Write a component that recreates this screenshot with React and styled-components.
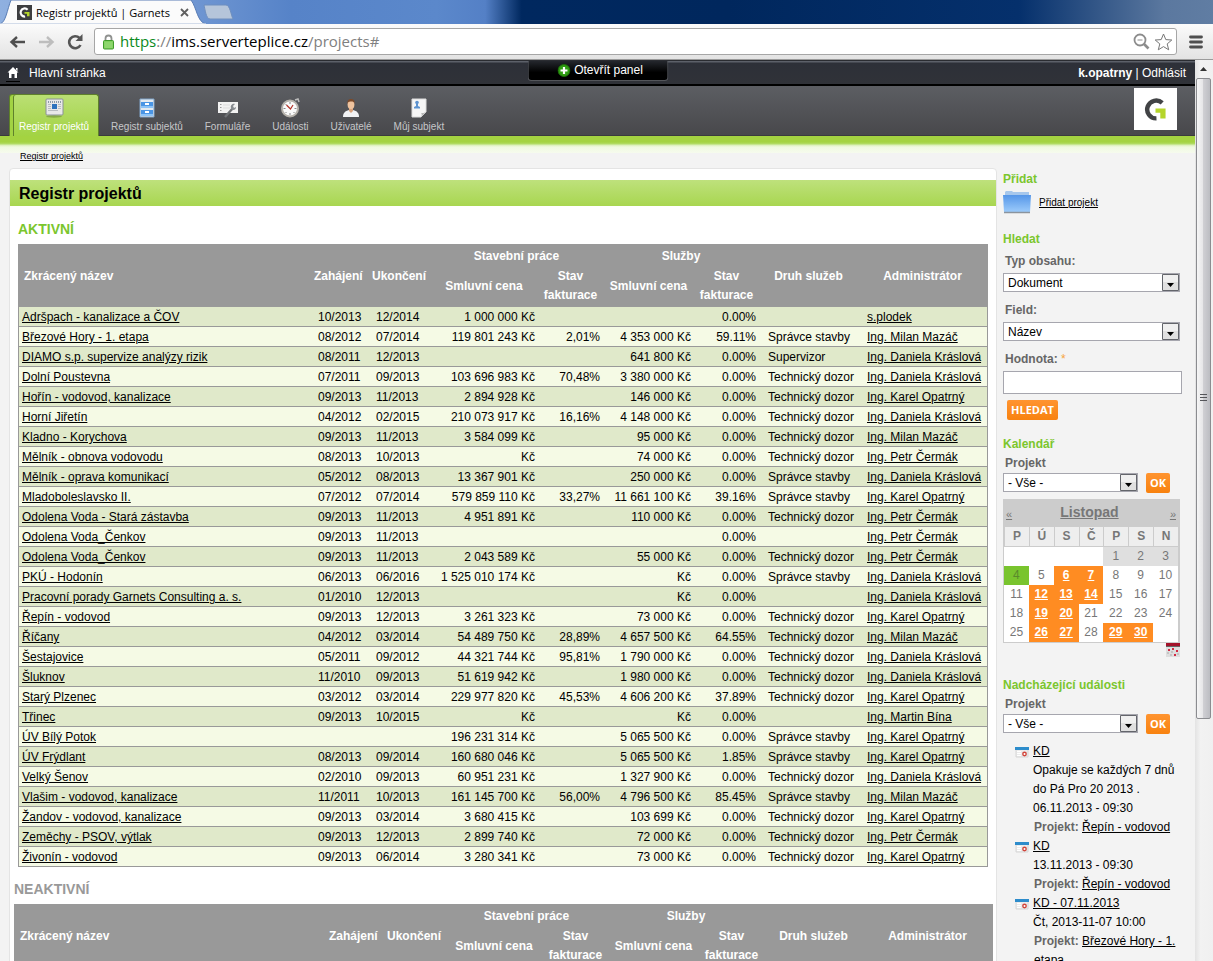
import React from 'react';
import styled, { createGlobalStyle, css } from 'styled-components';

const GlobalStyle = createGlobalStyle`
  * {
    box-sizing: border-box;
  }

  body {
    margin: 0;
    overflow: hidden;
    background: #f3f3f3;
    color: #000;
    font-family: 'Liberation Sans', Arial, sans-serif;
    font-size: 12px;
    line-height: 19px;
  }

  a {
    color: inherit;
  }

  svg {
    display: block;
    flex: none;
  }
`;

/* Browser window */

const Window = styled.div`
  display: flex;
  flex-direction: column;
  height: 100vh;
  overflow: hidden;
`;

const TabStrip = styled.div`
  display: flex;
  flex: none;
  height: 24px;
  background: linear-gradient(
    90deg,
    #8fb0e0 0,
    #6f96d2 16%,
    #5683c8 24%,
    #5b88cb 36%,
    #5480c6 40%,
    #00285f 43%,
    #00275d 60%,
    #05306c 84%,
    #5b789f 96%,
    #607da3 100%
  );
`;

const Tab = styled.div`
  position: relative;
  display: flex;
  align-items: center;
  width: 206px;
  height: 24px;
  padding-left: 17px;
`;

const TabShape = styled.svg`
  position: absolute;
  top: 0;
  left: 0;
`;

const TabTitle = styled.span`
  position: relative;
  width: 138px;
  margin-left: 4px;
  overflow: hidden;
  white-space: nowrap;
  font-family: 'Open Sans', sans-serif;
  font-size: 11px;
`;

const TabIcon = styled.span`
  position: relative;
`;

const TabClose = styled.button`
  position: relative;
  margin-left: 6px;
  padding: 0;
  border: 0;
  background: none;
`;

const Toolbar = styled.div`
  display: flex;
  flex: none;
  align-items: center;
  height: 36px;
  padding: 0 10px 0 9px;
  border-bottom: 1px solid #9b9b9b;
  background: linear-gradient(#fbfbfb, #e3e3e3);
`;

const ToolButton = styled.button`
  margin-right: 12px;
  padding: 0;
  border: 0;
  background: none;

  &:last-child {
    margin: 0 0 0 12px;
  }
`;

const AddressBar = styled.div`
  display: flex;
  flex: 1;
  align-items: center;
  height: 27px;
  margin-left: -2px;
  padding: 0 3px 0 7px;
  border: 1px solid #a6a6a6;
  border-radius: 3px;
  background: #fff;
`;

const Address = styled.div`
  flex: 1;
  margin-left: 5px;
  color: #808080;
  font-family: 'Open Sans', sans-serif;
  font-size: 15px;

  span {
    color: #0b8a1c;
  }

  b {
    color: #000;
    font-weight: 400;
  }
`;

const AddressActions = styled.div`
  display: flex;
  gap: 4px;
`;

const Viewport = styled.div`
  display: flex;
  flex: 1;
  min-height: 0;
`;

const Page = styled.div`
  flex: 1;
  min-width: 0;
  overflow: hidden;
`;

const Scrollbar = styled.div`
  display: flex;
  flex: none;
  flex-direction: column;
  width: 18px;
  padding: 0 2px 0 1px;
  background: linear-gradient(90deg, #e3e3e3, #f2f2f2 30%, #f0f0f0);
`;

const ScrollArrow = styled.div`
  display: flex;
  flex: none;
  align-items: center;
  justify-content: center;
  height: 18px;
`;

const ScrollThumb = styled.div`
  display: flex;
  flex: 640;
  align-items: center;
  justify-content: center;
  border: 1px solid #8b8c90;
  border-radius: 2px;
  background: linear-gradient(90deg, #f6f6f6, #e6e6e8 45%, #cfcfd3 50%, #bcbdc2);
`;

const ScrollRest = styled.div`
  flex: 243;
`;

/* Page header */

const TopBar = styled.div`
  position: relative;
  display: flex;
  align-items: center;
  height: 26px;
  padding: 2px 9px 0 6px;
  border-top: 1px solid #2a2c31;
  border-bottom: 2px solid #000;
  background: linear-gradient(#5c6069 0, #5c6069 1px, #2d3038 2px, #303238);
  color: #fff;

  a {
    text-decoration: none;
  }
`;

const HomeLink = styled.a`
  flex: 1;
  display: flex;
  align-items: center;
  gap: 9px;
`;

const PanelButton = styled.button`
  position: absolute;
  top: 0;
  left: 50%;
  display: flex;
  align-items: center;
  justify-content: center;
  gap: 4px;
  width: 141px;
  height: 20px;
  padding: 0 0 0 5px;
  transform: translateX(-50%);
  border: 1px solid #54565b;
  border-top: 0;
  border-radius: 0 0 4px 4px;
  background: linear-gradient(#24272d, #000 60%);
  color: #fff;
  font: inherit;
`;

const Nav = styled.nav`
  display: flex;
  align-items: flex-end;
  gap: 2px;
  height: 50px;
  padding: 0 18px 0 9px;
  border-bottom: 1px solid #3a3b3d;
  background: linear-gradient(#5c5e63, #48484b);
`;

const NavItem = styled.a`
  display: flex;
  flex-direction: column;
  align-items: center;
  height: 42px;
  margin-bottom: -1px;
  padding: 4px 10px 0;
  color: #c6c7c9;
  font-size: 10px;
  line-height: 14px;
  text-decoration: none;

  svg {
    margin-bottom: 2px;
  }

  ${({ $active }) =>
    $active &&
    css`
      padding: 3px 9px 0;
      border: 1px solid #5f812b;
      border-bottom: 0;
      border-radius: 3px 3px 0 0;
      background: linear-gradient(#badf74, #a2d343);
      box-shadow: inset 3px 0 0 #a2d343, inset 4px 0 0 #5f812b;
      color: #fff;
    `}
`;

const LogoBox = styled.div`
  display: flex;
  align-items: center;
  justify-content: center;
  width: 43px;
  height: 42px;
  margin: 0 0 5px auto;
  background: #fff;
`;

const GreenBand = styled.div`
  height: 17px;
  background: linear-gradient(#a4d341 0, #a4d341 6px, #b3dc67 8px, #d9efb5 9px, #f0f9e0 11px, #f6fbee 17px);
`;

/* Content */

const Content = styled.div`
  display: flex;
  padding-right: 13px;
`;

const MainColumn = styled.main`
  flex: 1;
  min-width: 0;
  padding-left: 9px;
`;

const Breadcrumb = styled.div`
  height: 15px;
  padding-left: 11px;
  font-size: 9px;
  line-height: 7px;
`;

const Panel = styled.div`
  padding-top: 11px;
  border: 1px solid #e4e4e4;
  border-radius: 4px;
  background: #fff;
`;

const PageTitle = styled.h1`
  margin: 0;
  padding: 2px 9px 0;
  background: linear-gradient(#bee17c, #a8d650);
  font-size: 16px;
  line-height: 24px;
`;

const Register = styled.section`
  padding: ${({ $inactive }) => ($inactive ? '13px 3px 0 4px' : '14px 8px 0')};

  h2 {
    margin: 0 0 5px;
    color: ${({ $inactive }) => ($inactive ? '#999' : '#7bc62d')};
    font-size: 14px;
    line-height: 19px;
  }
`;

const Table = styled.table`
  width: 100%;
  table-layout: fixed;
  border: 0 solid #999;
  border-width: 0 1px;
  border-spacing: 0;
  white-space: nowrap;
`;

const HeadCell = styled.th`
  padding: 2px 5px 0;
  text-align: ${({ $left }) => ($left ? 'left' : 'center')};
  white-space: normal;
`;

const HeadRow = styled.tr`
  height: ${({ $tall }) => ($tall ? 40 : 23)}px;
  background: #999;
  color: #fff;

  ${HeadCell} {
    ${({ $tall }) => $tall && 'padding: 0 5px 2px;'}
  }
`;

const Row = styled.tr`
  background: #f5fae5;

  &:nth-child(odd) {
    background: #e0e9ca;
  }
`;

const Cell = styled.td`
  padding: 1px 3px 0 9px;
  border-bottom: 1px solid #999;
  line-height: 18px;
  height: 20px;
  text-align: ${({ $right }) => ($right ? 'right' : 'left')};

  &:first-child {
    padding-left: 3px;
  }
`;

/* Sidebar */

const Sidebar = styled.aside`
  flex: none;
  width: 179px;
  margin: 16px 0 0 6px;
`;

const Block = styled.section`
  margin-bottom: ${({ $gap }) => $gap}px;

  h3 {
    margin: 0;
    color: #7bc62d;
    font-size: 12px;
    line-height: 20px;
  }
`;

const AddLink = styled.a`
  display: flex;
  align-items: center;
  gap: 8px;
  margin-top: 2px;
  font-size: 10px;
`;

const Field = styled.div`
  margin-bottom: 6px;

  label {
    display: block;
    padding: ${({ $compact }) => ($compact ? '0 2px' : '3px 2px 2px')};
    color: #666;
    font-weight: 700;
  }
`;

const Required = styled.span`
  color: #f7a53c;
  font-weight: 400;
`;

const TextInput = styled.input`
  display: block;
  width: 100%;
  height: 23px;
  padding: 0 4px;
  border: 1px solid #a6a6ae;
  background: #fff;
  font: inherit;
`;

const SelectBox = styled.span`
  position: relative;
  display: block;
  width: ${({ $width }) => $width || 177}px;

  select {
    display: block;
    width: 100%;
    height: 19px;
    padding: 1px 20px 0 4px;
    appearance: none;
    border: 1px solid #a6a6ae;
    border-radius: 0;
    background: #fff;
    color: #000;
    font: inherit;
    line-height: 16px;
  }

  svg {
    position: absolute;
    top: 1px;
    right: 1px;
    pointer-events: none;
  }
`;

const FilterRow = styled.div`
  display: flex;
  gap: 8px;
`;

const OrangeButton = styled.button`
  height: 20px;
  padding: 0 4px 1px;
  border: 0;
  border-radius: 2px;
  background: linear-gradient(#ff9430, #f8820f);
  color: #fff;
  font: bold 11px 'Open Sans', sans-serif;
`;

const SearchButton = styled(OrangeButton)`
  display: block;
  margin-left: 4px;
`;

const Calendar = styled.table`
  width: 177px;
  table-layout: fixed;
  border: 1px solid #ccc;
  border-width: 0 2px 1px 1px;
  border-spacing: 0;
  background: #fff;
  color: #777;
  text-align: center;

  th,
  td {
    height: 19px;
    padding: 0;
  }
`;

const MonthRow = styled.tr`
  background: #ccc;

  th {
    height: 28px;
    padding: 2px 2px 0;
    font-size: 11px;
    font-weight: 400;
    text-align: left;
  }

  th:nth-child(2) {
    padding: 0 3px 2px 0;
    font-size: 14px;
    font-weight: 700;
    text-align: center;
  }

  th:last-child {
    text-align: right;
  }
`;

const WeekdayRow = styled.tr`
  background: #eee;

  th {
    height: 20px;
    border-left: 1px solid #ccc;
    border-bottom: 1px solid #ccc;
  }
`;

const dayStyles = {
  past: css`
    background: #dfdfdf;
  `,
  today: css`
    background: #79c42e;
    color: #5a8a2c;
  `,
  event: css`
    background: #ff8c22;
    color: #fff;
    font-weight: 700;
  `,
};

const Day = styled.td`
  ${({ $kind }) => dayStyles[$kind]}
`;

const CalendarLink = styled.a`
  display: block;
  width: 14px;
  margin-left: 163px;
`;

const EventList = styled.ul`
  margin: 8px 0 0;
  padding: 0;
  list-style: none;
`;

const EventItem = styled.li`
  display: flex;
  gap: 4px;
  padding-left: 12px;

  > svg {
    margin-top: 4px;
  }
`;

const EventProject = styled.div`
  padding-left: 1px;

  b {
    color: #666;
  }
`;

const EventText = styled.div`
  flex: 1;
`;

/* Icons */

const GarnetsMark = ({ size, dark }) => (
  <svg width={size} height={size} viewBox="0 0 24 24">
    {dark && <path d="M0 0h24v24H0z" fill="#3d3e40" />}
    <path
      d={dark ? 'M17 7.5A6.5 6.5 0 1 0 13 18.4' : 'M19 5.200A9.300 9.300 0 1 0 13 21.300'}
      fill="none"
      stroke={dark ? '#fff' : '#414345'}
      strokeWidth={dark ? 3.5 : 4.6}
    />
    <path d={dark ? 'M12 11h8v7h-4v-4h-4z' : 'M12 11h10.500v10.500h-5.500V15.500h-5z'} fill="#b5d52b" />
  </svg>
);

const ArrowIcon = ({ flip, color }) => (
  <svg width="17" height="14" viewBox="0 0 17 14">
    <path
      d={flip ? 'M1 7h13M9 2l5.500 5L9 12' : 'M16 7H3M8 2L2.500 7L8 12'}
      fill="none"
      stroke={color}
      strokeWidth="2.400"
    />
  </svg>
);

const ReloadIcon = () => (
  <svg width="17" height="16" viewBox="0 0 17 16">
    <path d="M13.500 11A6 6 0 1 1 12.500 4" fill="none" stroke="#555" strokeWidth="2.600" />
    <path d="M15.500 0v7h-7z" fill="#555" />
  </svg>
);

const LockIcon = () => (
  <svg width="13" height="16" viewBox="0 0 13 16">
    <path d="M3.500 8V4.500a3 3 0 0 1 6 0V8" fill="none" stroke="#8f918f" strokeWidth="1.800" />
    <rect x="1.500" y="6.500" width="10" height="8.500" rx="1" fill="#7fd05c" stroke="#3f9c2b" />
    <path d="M2.500 9h8M2.500 11h8M2.500 13h8" stroke="#a5e088" strokeWidth=".8" />
  </svg>
);

const ZoomOutIcon = () => (
  <svg width="17" height="17" viewBox="0 0 17 17">
    <circle cx="7" cy="7" r="5.500" fill="none" stroke="#8c8c8c" strokeWidth="1.800" />
    <path d="M4.500 7h5" stroke="#8c8c8c" />
    <path d="M11 11l4.500 4.500" stroke="#8c8c8c" strokeWidth="2.600" />
  </svg>
);

const StarIcon = () => (
  <svg width="19" height="18" viewBox="0 0 19 18">
    <path
      d="M9.500 1l2.300 5.600 6 .4-4.600 3.900 1.500 5.900-5.200-3.200-5.200 3.200 1.500-5.900L1.200 7l6-.4z"
      fill="#fff"
      stroke="#777"
      strokeLinejoin="round"
    />
  </svg>
);

const MenuIcon = () => (
  <svg width="14" height="14" viewBox="0 0 14 14">
    <path d="M1.500 2h11M1.500 7h11M1.500 12h11" stroke="#4f4f4f" strokeWidth="2.800" strokeLinecap="round" />
  </svg>
);

const HomeIcon = () => (
  <svg width="14" height="19" viewBox="0 0 14 19">
    <path d="M7 3l5.500 5.500H11V14H8.500v-4h-3v4H3V8.500H1.500zM10 4h1.500v3L10 5.500z" fill="#fff" />
    <path d="M0 17.500h14" stroke="#000" />
  </svg>
);

const PlusIcon = () => (
  <svg width="13" height="13" viewBox="0 0 13 13">
    <circle cx="6.500" cy="6.500" r="6" fill="#2f9d12" stroke="#1c6a08" />
    <path d="M6.500 3v7M3 6.500h7" stroke="#fff" strokeWidth="2.200" />
  </svg>
);

const NavIcon = ({ name }) => (
  <svg width="22" height="20" viewBox="0 0 22 20">
    {name === 'projects' && (
      <>
        <ellipse cx="11" cy="18.500" rx="8" ry="1.200" fill="#6c8c38" opacity=".6" />
        <rect x="3" y="1" width="17" height="16" rx="1" fill="#e8e8e8" stroke="#8a9298" />
        <path d="M5 4h13" stroke="#8d9aa8" strokeWidth="2" strokeDasharray="1 1" />
        <path d="M5 6.500h3M5 8.500h3M5 10.500h3M5 12.500h10M15 6.500h3M15 8.500h3M15 10.500h3" stroke="#b9bdc2" />
        <path d="M9 6h5v5H9z" fill="#2e72bd" />
      </>
    )}
    {name === 'subjects' && (
      <>
        <path d="M4 1h14v18H4z" fill="#e3eaf0" stroke="#7fa3c8" />
        <path d="M5 4h12v6H5zM5 12h12v6H5z" fill="#4a95e4" />
        <path d="M5 8h12v2H5zM5 16h12v2H5z" fill="#8cc3f7" />
        <path d="M9 5h4v2H9zM9 13h4v2H9z" fill="#fff" />
      </>
    )}
    {name === 'forms' && (
      <>
        <path d="M1 4h20v11H1z" fill="#f2f2f2" />
        <path d="M3 6.500h1.500M3 9.500h1.500M3 12.500h1.500" stroke="#999" />
        <path d="M6 7h7M6 10h7" stroke="#ddd" />
        <path d="M8 19l8-9" stroke="#6f7275" strokeWidth="2.400" />
        <path d="M14 10c-1-3 2-5 4-4l-2 2 1 2 2-1c0 3-3 4-5 2z" fill="#888c90" />
      </>
    )}
    {name === 'events' && (
      <>
        <path d="M16 2l3-1 1 3" fill="none" stroke="#bbb" strokeWidth="1.500" />
        <circle cx="11" cy="10.500" r="8" fill="#fafafa" stroke="#b5b1aa" strokeWidth="2" />
        <path d="M11 4v2M11 15v2M4.500 10.500h2M15.500 10.500h2M6.500 6l1 1M15.500 15l-1-1M6.500 15l1-1" stroke="#888" />
        <path d="M7.500 7l4 4L14 7" fill="none" stroke="#b33328" strokeWidth="1.200" />
      </>
    )}
    {name === 'users' && (
      <>
        <path d="M3 19c0-4 2-6 6-7h4c4 1 6 3 6 7z" fill="#f1f2f4" />
        <path d="M9 9h4v4l-2 2-2-2z" fill="#d9a27b" />
        <ellipse cx="11" cy="6.500" rx="3.400" ry="4.500" fill="#efc39e" />
        <path d="M7.500 6C7 2 9 1 11 1s4 1 3.500 5C14 3.500 12 3.500 11 3.500S8 3.500 7.500 6z" fill="#7c4a2a" />
      </>
    )}
    {name === 'profile' && (
      <>
        <path d="M4 1h14v13l-5 5H4z" fill="#f6f6f6" stroke="#dcdcdc" />
        <path d="M18 14l-5 5c1-2 1-3 0-4 2 0 3 0 5-1z" fill="#b8b8b8" />
        <circle cx="9" cy="4.500" r="1.800" fill="#5d93d0" />
        <path d="M8 5h2v3l2 1v1.500H6V9l2-1z" fill="#5d93d0" />
      </>
    )}
  </svg>
);

const FolderIcon = () => (
  <svg width="28" height="23" viewBox="0 0 28 23">
    <defs>
      <linearGradient id="folder" x1="0" y1="0" x2="0" y2="1">
        <stop offset="0" stopColor="#5596e8" />
        <stop offset="1" stopColor="#9ccbfb" />
      </linearGradient>
    </defs>
    <path d="M2 1l1-1h6l1 1h16v5H2z" fill="#a6c7ec" />
    <path d="M0 4h28l-1 17H1z" fill="url(#folder)" />
    <path d="M1 21.500h26" stroke="#8b949e" strokeWidth="1.500" />
  </svg>
);

const SelectArrow = () => (
  <svg width="17" height="17" viewBox="0 0 17 17">
    <path d="M.5.5h16v16H.5z" fill="#e0e0e0" stroke="#63656b" />
    <path d="M1 1h15v7H1z" fill="#f0f0f0" />
    <path d="M5 9h7l-3.500 4z" fill="#000" />
  </svg>
);

const MonthIcon = () => (
  <svg width="14" height="14" viewBox="0 0 14 14">
    <path d="M0 0h14v14H0z" fill="#dedede" />
    <path d="M0 0h14v3H0z" fill="#a3122a" />
    <path d="M0 3.500h14" stroke="#666" />
    <path d="M2 6h2v2H2zM6 5h2v2H6zM10 7h2v2h-2zM8 11h2v2H8z" fill="#d32b43" />
    <path d="M1 10h2M5 9h2M11 11h2M4 12h2" stroke="#aaa" />
  </svg>
);

const EventIcon = () => (
  <svg width="14" height="12" viewBox="0 0 14 12">
    <path d="M1 2h12v9H1z" fill="#ececec" stroke="#d6d6d6" />
    <path d="M0 1h14v3H0z" fill="#2d8ccb" />
    <path d="M2 5.500h4M2 7.500h4M2 9.500h4" stroke="#fff" />
    <circle cx="9.500" cy="8" r="1.700" fill="#fff" stroke="#d0453b" strokeWidth="1.400" />
  </svg>
);

/* Data */

const navItems = [
  { icon: 'projects', label: 'Registr projektů', active: true },
  { icon: 'subjects', label: 'Registr subjektů' },
  { icon: 'forms', label: 'Formuláře' },
  { icon: 'events', label: 'Události' },
  { icon: 'users', label: 'Uživatelé' },
  { icon: 'profile', label: 'Můj subjekt' },
];

const MAZAC = 'Ing. Milan Mazáč';
const KRASLOVA = 'Ing. Daniela Kráslová';
const OPATRNY = 'Ing. Karel Opatrný';
const CERMAK = 'Ing. Petr Čermák';
const DOZOR = 'Technický dozor';
const SPRAVCE = 'Správce stavby';

// name, start, end, works price, works invoiced, services price, services invoiced, service type, administrator
const projects = [
  ['Adršpach - kanalizace a ČOV', '10/2013', '12/2014', '1 000 000 Kč', '', '', '0.00%', '', 's.plodek'],
  ['Březové Hory - 1. etapa', '08/2012', '07/2014', '119 801 243 Kč', '2,01%', '4 353 000 Kč', '59.11%', SPRAVCE, MAZAC],
  ['DIAMO s.p. supervize analýzy rizik', '08/2011', '12/2013', '', '', '641 800 Kč', '0.00%', 'Supervizor', KRASLOVA],
  ['Dolní Poustevna', '07/2011', '09/2013', '103 696 983 Kč', '70,48%', '3 380 000 Kč', '0.00%', DOZOR, KRASLOVA],
  ['Hořín - vodovod, kanalizace', '09/2013', '11/2013', '2 894 928 Kč', '', '146 000 Kč', '0.00%', DOZOR, OPATRNY],
  ['Horní Jiřetín', '04/2012', '02/2015', '210 073 917 Kč', '16,16%', '4 148 000 Kč', '0.00%', DOZOR, KRASLOVA],
  ['Kladno - Korychova', '09/2013', '11/2013', '3 584 099 Kč', '', '95 000 Kč', '0.00%', DOZOR, MAZAC],
  ['Mělník - obnova vodovodu', '08/2013', '10/2013', 'Kč', '', '74 000 Kč', '0.00%', DOZOR, CERMAK],
  ['Mělník - oprava komunikací', '05/2012', '08/2013', '13 367 901 Kč', '', '250 000 Kč', '0.00%', SPRAVCE, KRASLOVA],
  ['Mladoboleslavsko II.', '07/2012', '07/2014', '579 859 110 Kč', '33,27%', '11 661 100 Kč', '39.16%', SPRAVCE, OPATRNY],
  ['Odolena Voda - Stará zástavba', '09/2013', '11/2013', '4 951 891 Kč', '', '110 000 Kč', '0.00%', DOZOR, CERMAK],
  ['Odolena Voda_Čenkov', '09/2013', '11/2013', '', '', '', '0.00%', '', CERMAK],
  ['Odolena Voda_Čenkov', '09/2013', '11/2013', '2 043 589 Kč', '', '55 000 Kč', '0.00%', DOZOR, CERMAK],
  ['PKÚ - Hodonín', '06/2013', '06/2016', '1 525 010 174 Kč', '', 'Kč', '0.00%', SPRAVCE, KRASLOVA],
  ['Pracovní porady Garnets Consulting a. s.', '01/2010', '12/2013', '', '', 'Kč', '0.00%', '', KRASLOVA],
  ['Řepín - vodovod', '09/2013', '12/2013', '3 261 323 Kč', '', '73 000 Kč', '0.00%', DOZOR, OPATRNY],
  ['Říčany', '04/2012', '03/2014', '54 489 750 Kč', '28,89%', '4 657 500 Kč', '64.55%', DOZOR, MAZAC],
  ['Šestajovice', '05/2011', '09/2012', '44 321 744 Kč', '95,81%', '1 790 000 Kč', '0.00%', DOZOR, KRASLOVA],
  ['Šluknov', '11/2010', '09/2013', '51 619 942 Kč', '', '1 980 000 Kč', '0.00%', DOZOR, KRASLOVA],
  ['Starý Plzenec', '03/2012', '03/2014', '229 977 820 Kč', '45,53%', '4 606 200 Kč', '37.89%', DOZOR, OPATRNY],
  ['Třinec', '09/2013', '10/2015', 'Kč', '', 'Kč', '0.00%', '', 'Ing. Martin Bína'],
  ['ÚV Bílý Potok', '', '', '196 231 314 Kč', '', '5 065 500 Kč', '0.00%', SPRAVCE, OPATRNY],
  ['ÚV Frýdlant', '08/2013', '09/2014', '160 680 046 Kč', '', '5 065 500 Kč', '1.85%', SPRAVCE, OPATRNY],
  ['Velký Šenov', '02/2010', '09/2013', '60 951 231 Kč', '', '1 327 900 Kč', '0.00%', DOZOR, KRASLOVA],
  ['Vlašim - vodovod, kanalizace', '11/2011', '10/2013', '161 145 700 Kč', '56,00%', '4 796 500 Kč', '85.45%', SPRAVCE, MAZAC],
  ['Žandov - vodovod, kanalizace', '09/2013', '03/2014', '3 680 415 Kč', '', '103 699 Kč', '0.00%', DOZOR, OPATRNY],
  ['Zeměchy - PSOV, výtlak', '09/2013', '12/2013', '2 899 740 Kč', '', '72 000 Kč', '0.00%', DOZOR, CERMAK],
  ['Živonín - vodovod', '09/2013', '06/2014', '3 280 341 Kč', '', '73 000 Kč', '0.00%', DOZOR, OPATRNY],
];

const activeColumns = [58, 63, 108, 65, 91, 65, 99, 129];
const inactiveColumns = [58, 63, 98, 65, 91, 65, 99, 129];

const weeks = [
  ['', '', '', '', 1, 2, 3],
  [4, 5, 6, 7, 8, 9, 10],
  [11, 12, 13, 14, 15, 16, 17],
  [18, 19, 20, 21, 22, 23, 24],
  [25, 26, 27, 28, 29, 30, ''],
];
const eventDays = [6, 7, 12, 13, 14, 19, 20, 26, 27, 29, 30];

const events = [
  {
    title: 'KD',
    lines: ['Opakuje se každých 7 dnů do Pá Pro 20 2013 .', '06.11.2013 - 09:30'],
    project: 'Řepín - vodovod',
  },
  { title: 'KD', lines: ['13.11.2013 - 09:30'], project: 'Řepín - vodovod' },
  { title: 'KD - 07.11.2013', lines: ['Čt, 2013-11-07 10:00'], project: 'Březové Hory - 1. etapa' },
];

const dayKind = (day) => {
  if (!day) return undefined;
  if (day < 4) return 'past';
  if (day === 4) return 'today';
  return eventDays.includes(day) ? 'event' : undefined;
};

const ProjectTable = ({ columns, rows }) => (
  <Table>
    <colgroup>
      <col />
      {columns.map((width, index) => (
        <col key={index} width={width} />
      ))}
    </colgroup>
    <thead>
      <HeadRow>
        <HeadCell $left rowSpan={2}>Zkrácený název</HeadCell>
        <HeadCell rowSpan={2}>Zahájení</HeadCell>
        <HeadCell rowSpan={2}>Ukončení</HeadCell>
        <HeadCell colSpan={2}>Stavební práce</HeadCell>
        <HeadCell colSpan={2}>Služby</HeadCell>
        <HeadCell rowSpan={2}>Druh služeb</HeadCell>
        <HeadCell rowSpan={2}>Administrátor</HeadCell>
      </HeadRow>
      <HeadRow $tall>
        <HeadCell>Smluvní cena</HeadCell>
        <HeadCell>Stav fakturace</HeadCell>
        <HeadCell>Smluvní cena</HeadCell>
        <HeadCell>Stav fakturace</HeadCell>
      </HeadRow>
    </thead>
    <tbody>
      {rows.map((row, index) => (
        <Row key={index}>
          {row.map((value, column) => (
            <Cell key={column} $right={column > 2 && column < 7}>
              {column === 0 || column === 8 ? <a href="#">{value}</a> : value}
            </Cell>
          ))}
        </Row>
      ))}
    </tbody>
  </Table>
);

const Select = ({ id, width, value }) => (
  <SelectBox $width={width}>
    <select id={id} defaultValue={value}>
      <option>{value}</option>
    </select>
    <SelectArrow />
  </SelectBox>
);

const ProjectFilter = ({ id }) => (
  <Field $compact>
    <label htmlFor={id}>Projekt</label>
    <FilterRow>
      <Select id={id} width={135} value="- Vše -" />
      <OrangeButton type="button">OK</OrangeButton>
    </FilterRow>
  </Field>
);

const EventCalendar = () => (
  <Calendar>
    <thead>
      <MonthRow>
        <th><a href="#">«</a></th>
        <th colSpan={5}><a href="#">Listopad</a></th>
        <th><a href="#">»</a></th>
      </MonthRow>
      <WeekdayRow>
        {['P', 'Ú', 'S', 'Č', 'P', 'S', 'N'].map((day, index) => (
          <th key={index}>{day}</th>
        ))}
      </WeekdayRow>
    </thead>
    <tbody>
      {weeks.map((week, index) => (
        <tr key={index}>
          {week.map((day, column) => (
            <Day key={column} $kind={dayKind(day)}>
              {dayKind(day) === 'event' ? <a href="#">{day}</a> : day}
            </Day>
          ))}
        </tr>
      ))}
    </tbody>
  </Calendar>
);

const App = () => {
  return (
    <Window>
      <GlobalStyle />
      <TabStrip>
        <Tab>
          <TabShape width="236" height="24" viewBox="0 0 236 24">
            <path d="M0 24C6 22 7 10 11 0H191C197 8 197 22 206 24z" fill="#fbfbfb" stroke="#5a7db5" />
            <path d="M0 24.500h206" stroke="#fbfbfb" strokeWidth="2" />
            <path d="M204 5h22c4 0 5 10 7 14h-23c-4 0-5-10-6-14z" fill="#b5c5da" stroke="#6f8fbf" />
          </TabShape>
          <TabIcon>
            <GarnetsMark size={15} dark />
          </TabIcon>
          <TabTitle>Registr projektů | Garnets</TabTitle>
          <TabClose type="button" aria-label="Zavřít">
            <svg width="9" height="9" viewBox="0 0 9 9">
              <path d="M1 1l7 7M8 1L1 8" stroke="#5f5f5f" strokeWidth="1.800" />
            </svg>
          </TabClose>
        </Tab>
      </TabStrip>
      <Toolbar>
        <ToolButton type="button" aria-label="Zpět"><ArrowIcon color="#4f4f4f" /></ToolButton>
        <ToolButton type="button" aria-label="Vpřed"><ArrowIcon flip color="#bdbdbd" /></ToolButton>
        <ToolButton type="button" aria-label="Obnovit"><ReloadIcon /></ToolButton>
        <AddressBar>
          <LockIcon />
          <Address>
            <span>https</span>://<b>ims.serverteplice.cz</b>/projects#
          </Address>
          <AddressActions>
            <ZoomOutIcon />
            <StarIcon />
          </AddressActions>
        </AddressBar>
        <ToolButton type="button" aria-label="Nabídka"><MenuIcon /></ToolButton>
      </Toolbar>
      <Viewport>
        <Page>
          <TopBar>
            <HomeLink href="#">
              <HomeIcon />
              Hlavní stránka
            </HomeLink>
            <PanelButton type="button">
              <PlusIcon />
              Otevřít panel
            </PanelButton>
            <div>
              <a href="#"><b>k.opatrny</b></a> | <a href="#">Odhlásit</a>
            </div>
          </TopBar>
          <Nav>
            {navItems.map((item) => (
              <NavItem key={item.icon} href="#" $active={item.active}>
                <NavIcon name={item.icon} />
                {item.label}
              </NavItem>
            ))}
            <LogoBox>
              <GarnetsMark size={23} />
            </LogoBox>
          </Nav>
          <GreenBand />
          <Content>
            <MainColumn>
              <Breadcrumb>
                <a href="#">Registr projektů</a>
              </Breadcrumb>
              <Panel>
                <PageTitle>Registr projektů</PageTitle>
                <Register>
                  <h2>AKTIVNÍ</h2>
                  <ProjectTable columns={activeColumns} rows={projects} />
                </Register>
                <Register $inactive>
                  <h2>NEAKTIVNÍ</h2>
                  <ProjectTable columns={inactiveColumns} rows={[]} />
                </Register>
              </Panel>
            </MainColumn>
            <Sidebar>
              <Block $gap={15}>
                <h3>Přidat</h3>
                <AddLink href="#">
                  <FolderIcon />
                  Přidat projekt
                </AddLink>
              </Block>
              <Block $gap={14}>
                <h3>Hledat</h3>
                <Field>
                  <label htmlFor="content-type">Typ obsahu:</label>
                  <Select id="content-type" value="Dokument" />
                </Field>
                <Field>
                  <label htmlFor="field">Field:</label>
                  <Select id="field" value="Název" />
                </Field>
                <Field>
                  <label htmlFor="value">
                    Hodnota: <Required>*</Required>
                  </label>
                  <TextInput id="value" type="text" />
                </Field>
                <SearchButton type="button">HLEDAT</SearchButton>
              </Block>
              <Block $gap={18}>
                <h3>Kalendář</h3>
                <ProjectFilter id="calendar-project" />
                <EventCalendar />
                <CalendarLink href="#" aria-label="Kalendář">
                  <MonthIcon />
                </CalendarLink>
              </Block>
              <Block $gap={0}>
                <h3>Nadcházející události</h3>
                <ProjectFilter id="events-project" />
                <EventList>
                  {events.map((event, index) => (
                    <EventItem key={index}>
                      <EventIcon />
                      <EventText>
                        <a href="#">{event.title}</a>
                        {event.lines.map((line) => (
                          <div key={line}>{line}</div>
                        ))}
                        <EventProject>
                          <b>Projekt:</b> <a href="#">{event.project}</a>
                        </EventProject>
                      </EventText>
                    </EventItem>
                  ))}
                </EventList>
              </Block>
            </Sidebar>
          </Content>
        </Page>
        <Scrollbar>
          <ScrollArrow>
            <svg width="7" height="4" viewBox="0 0 7 4">
              <path d="M0 4h7L3.500 0z" fill="#333" />
            </svg>
          </ScrollArrow>
          <ScrollThumb>
            <svg width="7" height="8" viewBox="0 0 7 8">
              <path d="M0 .5h7M0 3.500h7M0 6.500h7" stroke="#55565a" />
            </svg>
          </ScrollThumb>
          <ScrollRest />
        </Scrollbar>
      </Viewport>
    </Window>
  );
};

export default App;
